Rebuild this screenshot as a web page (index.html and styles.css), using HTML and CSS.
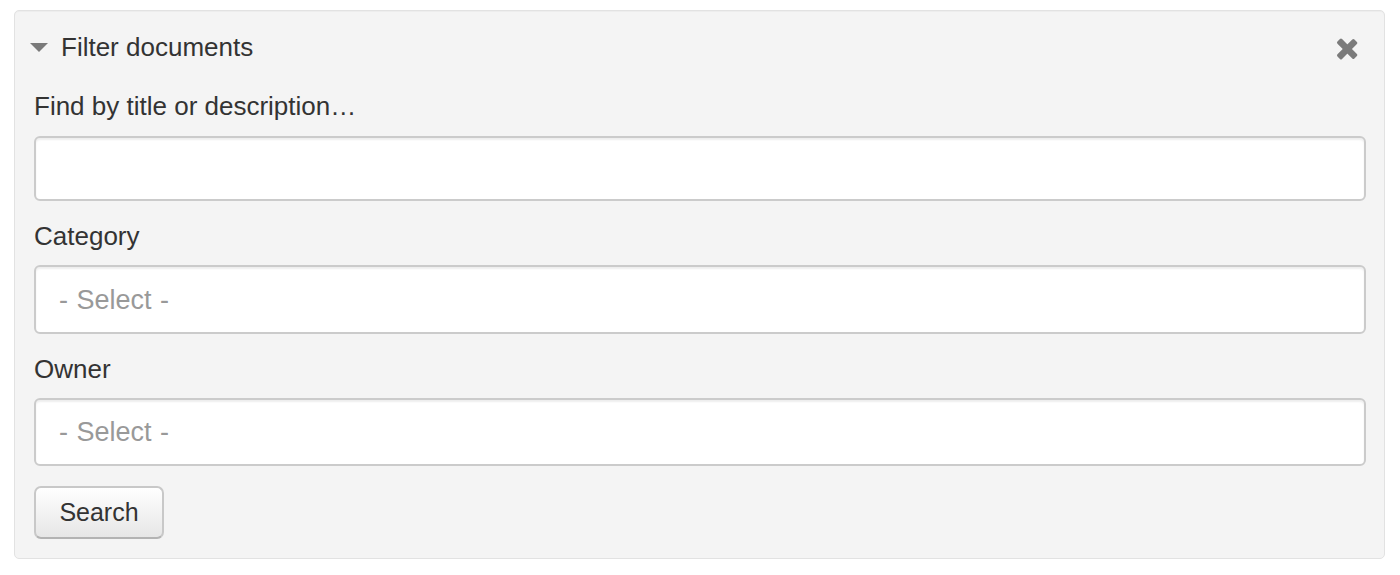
FILE: index.html
```html
<!DOCTYPE html>
<html lang="en">
<head>
    <meta charset="UTF-8">
    <title>Filter documents</title>
    <link rel="stylesheet" href="styles.css">
</head>
<body>
    <form class="well filter-panel">
        <div class="panel-header">
            <span class="caret"></span>
            <span class="panel-title">Filter documents</span>
            <span class="close-btn">
                <svg width="24" height="24" viewBox="0 0 24 24">
                    <g fill="#7b7b7b">
                        <rect x="9" y="0" width="6.5" height="24" rx="1.5" transform="rotate(45 12 12)"/>
                        <rect x="9" y="0" width="6.5" height="24" rx="1.5" transform="rotate(-45 12 12)"/>
                    </g>
                </svg>
            </span>
        </div>

        <label class="field-label label-first" for="query">Find by title or description…</label>
        <input class="text-input" id="query" type="text">

        <label class="field-label" for="category">Category</label>
        <select class="select-input" id="category">
            <option>- Select -</option>
        </select>

        <label class="field-label" for="owner">Owner</label>
        <select class="select-input select-owner" id="owner">
            <option>- Select -</option>
        </select>

        <div class="actions">
            <button class="btn" type="button">Search</button>
        </div>
    </form>
</body>
</html>
```

FILE: styles.css
```css
body, html {
    margin: 0;
    padding: 0;
    background-color: #fff;
    color: #333;
    font-family: "Liberation Sans", Arial, sans-serif;
}

.well {
    margin: 10px 15px 0 14px;
    padding: 20px 18px 19px 19px;
    background-color: #f4f4f4;
    border: 1px solid #e2e2e2;
    border-radius: 5px;
    display: flex;
    flex-direction: column;
    box-shadow: inset 0 1px 1px rgba(0, 0, 0, 0.03);
}

.panel-header {
    display: flex;
    align-items: center;
    height: 32px;
}

.caret {
    width: 0;
    height: 0;
    border-left: 9px solid transparent;
    border-right: 9px solid transparent;
    border-top: 9px solid #7a7a7a;
    margin-left: -4px;
    margin-right: 13px;
}

.panel-title {
    font-size: 26px;
    flex: 1;
}

.close-btn {
    display: flex;
    margin-right: 7px;
    margin-top: 4px;
}

.field-label {
    font-size: 26px;
    line-height: 32px;
    margin-top: 19px;
    margin-bottom: 13px;
}

.label-first {
    margin-top: 27px;
    margin-bottom: 14px;
}

.text-input, .select-input {
    box-sizing: border-box;
    width: 100%;
    background-color: #fff;
    border: 2px solid #cbcbcb;
    border-radius: 6px;
    box-shadow: inset 0 2px 2px rgba(0, 0, 0, 0.07);
    font-family: inherit;
    margin: 0;
}

.text-input {
    height: 65px;
}

.select-input {
    -webkit-appearance: none;
    appearance: none;
    height: 69px;
    padding: 0 23px;
    font-size: 27px;
    word-spacing: 1px;
    color: #999;
}

.select-owner {
    height: 68px;
}

.actions {
    margin-top: 20px;
    display: flex;
}

.btn {
    box-sizing: border-box;
    width: 130px;
    height: 53px;
    padding: 0;
    font-family: inherit;
    font-size: 25px;
    color: #333;
    background: linear-gradient(#ffffff, #e6e6e6);
    border: 2px solid #c8c8c8;
    border-bottom-color: #b3b3b3;
    border-radius: 7px;
    box-shadow: inset 0 1px 0 rgba(255, 255, 255, 0.2);
    cursor: pointer;
}
```
